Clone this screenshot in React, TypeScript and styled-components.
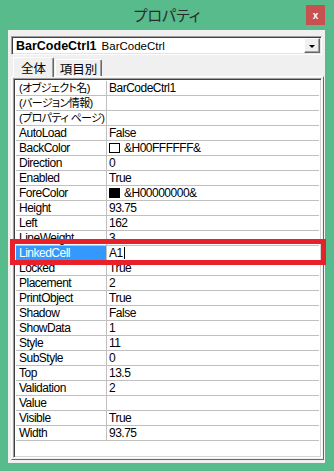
import React from "react";
import styled, { createGlobalStyle } from "styled-components";

const Global = createGlobalStyle`
  html, body { margin: 0; padding: 0; }
  body {
    background: #58bb8b;
    font-family: "Liberation Sans", "Noto Sans CJK JP", sans-serif;
  }
`;

const Window = styled.div`
  position: relative;
  width: 334px;
  height: 471px;
  background: #58bb8b;
  display: flex;
  flex-direction: column;
  overflow: hidden;
`;

const TitleBar = styled.div`
  height: 30px;
  flex: none;
  display: grid;
  grid-template-columns: 1fr auto 1fr;
  align-items: start;
`;

const Title = styled.div`
  grid-column: 2;
  font-family: "Noto Sans CJK JP", sans-serif;
  font-size: 15px;
  line-height: 30px;
  color: #2a2a2a;
  font-feature-settings: "palt";
`;

const CloseButton = styled.div`
  grid-column: 3;
  justify-self: end;
  margin: 5px 9px 0 0;
  width: 19px;
  height: 20px;
  background: #c75050;
  color: #fff;
  display: flex;
  align-items: center;
  justify-content: center;
  font: bold 10px "Liberation Sans", sans-serif;
`;

const Client = styled.div`
  flex: 1;
  margin: 0 9px 8px 8px;
  background: #f0f0f0;
  padding: 6px 1px 3px 3px;
  display: flex;
  flex-direction: column;
  min-height: 0;
`;

const Combo = styled.div`
  flex: none;
  height: 19px;
  box-sizing: border-box;
  margin-right: 2px;
  background: #fff;
  border: 1px solid;
  border-color: #a0a0a0 #fff #fff #a0a0a0;
  box-shadow: inset 1px 1px 0 #404040, inset -1px -1px 0 #e3e3e3;
  display: flex;
  align-items: center;
  padding: 0 1px 0 4px;
  font-size: 12px;
  color: #000;
`;

const ComboBold = styled.span`
  font-weight: bold;
  font-size: 12.5px;
  margin-right: 5px;
`;

const ComboText = styled.span`
  font-size: 11.5px;
  flex: 1;
`;

const DropButton = styled.div`
  width: 16px;
  height: 15px;
  box-sizing: border-box;
  background: #f0f0f0;
  border: 1px solid;
  border-color: #fff #696969 #696969 #fff;
  box-shadow: inset -1px -1px 0 #a0a0a0;
  display: flex;
  align-items: center;
  justify-content: center;
  &::after {
    content: "";
    width: 0;
    height: 0;
    border-left: 3px solid transparent;
    border-right: 3px solid transparent;
    border-top: 3px solid #000;
    margin-top: 2px;
  }
`;

const TabRow = styled.div`
  flex: none;
  height: 19px;
  margin: 2px 0 0 2px;
  display: flex;
  align-items: flex-end;
`;

const Tab = styled.div<{ $active?: boolean }>`
  position: relative;
  z-index: ${(p) => (p.$active ? 2 : 1)};
  box-sizing: border-box;
  width: ${(p) => (p.$active ? 41 : 47)}px;
  height: ${(p) => (p.$active ? 20 : 17)}px;
  margin-bottom: ${(p) => (p.$active ? -1 : 0)}px;
  margin-left: ${(p) => (p.$active ? 0 : 1)}px;
  background: #f0f0f0;
  border-left: 1px solid #fff;
  border-top: 1px solid #fff;
  border-right: 1px solid #696969;
  box-shadow: inset -1px 0 0 #a0a0a0;
  border-radius: 2px 2px 0 0;
  display: flex;
  align-items: center;
  justify-content: center;
  font-family: "Noto Sans CJK JP", sans-serif;
  font-size: 12.5px;
  color: #000;
  padding-bottom: ${(p) => (p.$active ? 1 : 0)}px;
`;

const Frame = styled.div`
  flex: 1;
  min-height: 0;
  box-sizing: border-box;
  border: 1px solid;
  border-color: #fff #696969 #696969 #fff;
  padding: 1px;
  display: flex;
  flex-direction: column;
`;

const Grid = styled.div`
  flex: 1;
  min-height: 0;
  box-sizing: border-box;
  background: #fff;
  border: 1px solid;
  border-color: #a0a0a0 #fff #fff #a0a0a0;
  box-shadow: inset 1px 1px 0 #404040, inset -1px -1px 0 #d4d4d4;
  padding: 2px 2px 0 2px;
  display: flex;
  flex-direction: column;
`;

const Row = styled.div`
  flex: none;
  height: 15px;
  box-sizing: border-box;
  display: grid;
  grid-template-columns: 91px 1fr;
  border-bottom: 1px solid #c0c0c0;
  font-size: 12px;
  line-height: 14px;
  letter-spacing: -0.5px;
  color: #000;
  white-space: nowrap;
`;

const NameCell = styled.div<{ $selected?: boolean; $jp?: boolean }>`
  box-sizing: border-box;
  border-right: 1px solid #c0c0c0;
  padding-left: 3px;
  overflow: hidden;
  background: ${(p) => (p.$selected ? "#3399ff" : "transparent")};
  color: ${(p) => (p.$selected ? "#fff" : "#000")};
  font-size: ${(p) => (p.$jp ? 11 : 12)}px;
  letter-spacing: ${(p) => (p.$jp ? -0.6 : -0.5)}px;
  font-feature-settings: "palt";
`;

const ValueCell = styled.div`
  padding-left: 2px;
  overflow: hidden;
  display: flex;
  align-items: center;
`;

const Swatch = styled.span<{ $color: string }>`
  display: inline-block;
  box-sizing: border-box;
  width: 11px;
  height: 10px;
  border: 1px solid #000;
  background: ${(p) => p.$color};
  margin-right: 4px;
  flex: none;
`;

const Caret = styled.span`
  display: inline-block;
  width: 1px;
  height: 12px;
  background: #000;
  margin-left: 1px;
`;

const Highlight = styled.div`
  position: absolute;
  left: 10px;
  top: 239px;
  width: 316px;
  height: 26px;
  box-sizing: border-box;
  border: 5px solid #e8202a;
  pointer-events: none;
`;

type Prop = { name: string; value?: string; swatch?: string; selected?: boolean; jp?: boolean };

const props: Prop[] = [
  { name: "(オブジェクト名)", value: "BarCodeCtrl1", jp: true },
  { name: "(バージョン情報)", jp: true },
  { name: "(プロパティ ページ)", jp: true },
  { name: "AutoLoad", value: "False" },
  { name: "BackColor", value: "&H00FFFFFF&", swatch: "#fff" },
  { name: "Direction", value: "0" },
  { name: "Enabled", value: "True" },
  { name: "ForeColor", value: "&H00000000&", swatch: "#000" },
  { name: "Height", value: "93.75" },
  { name: "Left", value: "162" },
  { name: "LineWeight", value: "3" },
  { name: "LinkedCell", value: "A1", selected: true },
  { name: "Locked", value: "True" },
  { name: "Placement", value: "2" },
  { name: "PrintObject", value: "True" },
  { name: "Shadow", value: "False" },
  { name: "ShowData", value: "1" },
  { name: "Style", value: "11" },
  { name: "SubStyle", value: "0" },
  { name: "Top", value: "13.5" },
  { name: "Validation", value: "2" },
  { name: "Value" },
  { name: "Visible", value: "True" },
  { name: "Width", value: "93.75" },
];

export default function App() {
  return (
    <>
      <Global />
      <Window>
        <TitleBar>
          <Title>プロパティ</Title>
          <CloseButton>x</CloseButton>
        </TitleBar>
        <Client>
          <Combo>
            <ComboBold>BarCodeCtrl1</ComboBold>
            <ComboText>BarCodeCtrl</ComboText>
            <DropButton />
          </Combo>
          <TabRow>
            <Tab $active>全体</Tab>
            <Tab>項目別</Tab>
          </TabRow>
          <Frame>
            <Grid>
              {props.map((p) => (
                <Row key={p.name}>
                  <NameCell $selected={p.selected} $jp={p.jp}>
                    {p.name}
                  </NameCell>
                  <ValueCell>
                    {p.swatch && <Swatch $color={p.swatch} />}
                    {p.value}
                    {p.selected && <Caret />}
                  </ValueCell>
                </Row>
              ))}
            </Grid>
          </Frame>
        </Client>
        <Highlight />
      </Window>
    </>
  );
}
